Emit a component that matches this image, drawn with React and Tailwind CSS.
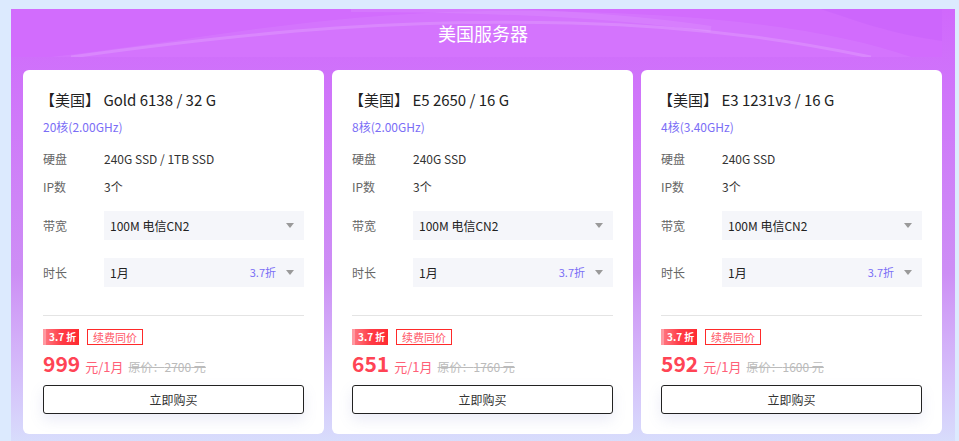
import React from 'react';

const servers = [
  { name: 'Gold 6138 / 32 G', cpu: '20核(2.00GHz)', disk: '240G SSD / 1TB SSD', price: 999, origin: 2700 },
  { name: 'E5 2650 / 16 G', cpu: '8核(2.00GHz)', disk: '240G SSD', price: 651, origin: 1760 },
  { name: 'E3 1231v3 / 16 G', cpu: '4核(3.40GHz)', disk: '240G SSD', price: 592, origin: 1600 },
];

const Caret = () => (
  <svg width="8" height="5" viewBox="0 0 8 5" className="ml-2">
    <path d="M0 0 L8 0 L4 5 Z" fill="#9a9a9a" />
  </svg>
);

const Select = ({ value, tip }) => (
  <div className="flex-1 h-[29px] bg-[#f5f6fa] flex items-center pl-[6px] pr-[10px] text-[12px] text-[#222]">
    <span className="flex-1">{value}</span>
    {tip && <span className="text-[11px] text-[#7b6ef6] mr-[2px]">{tip}</span>}
    <Caret />
  </div>
);

const ServerCard = ({ item }) => (
  <div className="w-[301px] h-[364px] bg-white rounded-[6px] px-[20px] pt-[20px] flex flex-col">
    <div className="text-[15px] leading-[20px] text-[#222] -ml-[3px]">【美国】 {item.name}</div>
    <div className="mt-[9px] text-[12px] leading-[16px] text-[#7b6ef6]">{item.cpu}</div>

    <div className="mt-[16px] flex items-center text-[12px] leading-[16px]">
      <span className="w-[61px] text-[#666]">硬盘</span>
      <span className="text-[#333]">{item.disk}</span>
    </div>
    <div className="mt-[12px] flex items-center text-[12px] leading-[16px]">
      <span className="w-[61px] text-[#666]">IP数</span>
      <span className="text-[#333]">3个</span>
    </div>

    <div className="mt-[16px] flex items-center">
      <span className="w-[61px] text-[12px] text-[#666]">带宽</span>
      <Select value="100M 电信CN2" />
    </div>
    <div className="mt-[18px] flex items-center">
      <span className="w-[61px] text-[12px] text-[#666]">时长</span>
      <Select value="1月" tip="3.7折" />
    </div>

    <div className="mt-[28px] border-t border-[#e4e4e4]" />

    {/* discount tags */}
    <div className="mt-[13px] flex items-center gap-[8px]">
      <div className="h-[16px] w-[36px] flex items-center whitespace-nowrap bg-gradient-to-r from-[#ff7a86] via-[#ff3b47] to-[#ff2a30]">
        <span className="w-[3px] h-full bg-[#ff9aa2]" />
        <span className="ml-[3px] text-[10px] font-bold text-white leading-none">3.7 折</span>
      </div>
      <div className="h-[16px] px-[5px] border border-[#ff2a2a] flex items-center whitespace-nowrap text-[11px] text-[#ff5a6a] leading-none">续费同价</div>
    </div>

    <div className="mt-[4px] flex items-baseline whitespace-nowrap">
      <span className="text-[21px] font-bold text-[#ff4455] leading-[28px]">{item.price}</span>
      <span className="ml-[5px] text-[13px] text-[#ff6077]">元/1月</span>
      <span className="ml-[5px] text-[12px] text-[#bbbbbb] line-through">原价：{item.origin} 元</span>
    </div>

    <button className="mt-[8px] h-[29px] w-full border border-[#222] rounded-[3px] bg-white text-[12px] text-[#333] shadow-[0_6px_14px_rgba(120,130,200,0.15)]">
      立即购买
    </button>
  </div>
);

export default function App() {
  return (
    <div
      className="w-[959px] h-[441px] overflow-hidden bg-[#dceafe] pt-[9px] pl-[11px]"
      style={{ fontFamily: '"Noto Sans CJK SC", "Open Sans", sans-serif' }}
    >
      <div className="w-[944px] h-[440px] bg-gradient-to-b from-[#d068fc] via-[#cd8ef5] via-60% to-[#d8e0fc]">
        {/* header strip with soft waves */}
        <div className="relative h-[48px] flex items-center justify-center overflow-hidden">
          <svg className="absolute inset-0" width="944" height="48" viewBox="0 0 944 48" preserveAspectRatio="none">
            <rect x="0" y="0" width="931" height="48" fill="#d26cfd" />
            <path d="M40 48 C200 30 320 0 520 2 C700 4 820 20 900 48 Z" fill="#ffffff" opacity="0.06" />
            <path d="M60 48 C260 20 400 10 560 14 C720 18 820 40 860 48" stroke="#ffffff" strokeOpacity="0.14" strokeWidth="3" fill="none" />
            <path d="M340 0 C500 0 620 8 700 20" stroke="#ffffff" strokeOpacity="0.08" strokeWidth="6" fill="none" />
            <path d="M810 0 C840 10 880 25 931 32 L931 0 Z" fill="#c65ef9" opacity="0.4" />
          </svg>
          <span className="relative text-[18px] text-white">美国服务器</span>
        </div>

        <div className="mt-[13px] ml-[12px] flex gap-[8px]">
          {servers.map((item, i) => (
            <ServerCard key={i} item={item} />
          ))}
        </div>
      </div>
    </div>
  );
}
